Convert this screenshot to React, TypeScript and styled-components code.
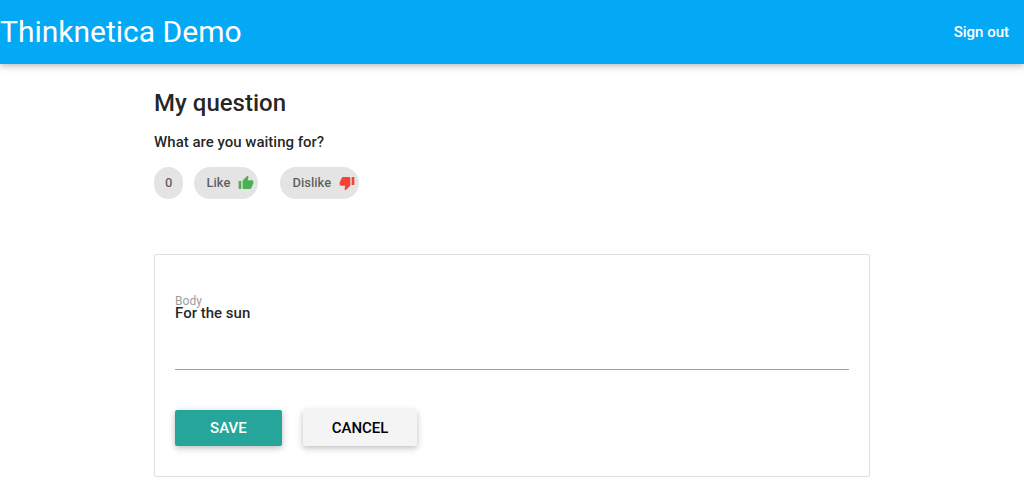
import React, { useState } from 'react';
import styled, { createGlobalStyle } from 'styled-components';
import { MdThumbUp, MdThumbDown } from 'react-icons/md';

const GlobalStyle = createGlobalStyle`
  *, *::before, *::after { box-sizing: border-box; }
  body {
    margin: 0;
    background: #fff;
    color: rgba(0, 0, 0, 0.87);
    font-family: Roboto, "Liberation Sans", sans-serif;
    font-size: 15px;
    font-weight: 500;
    line-height: 22px;
  }
  button, textarea { font: inherit; }
`;

const NavBar = styled.nav`
  display: flex;
  align-items: center;
  justify-content: space-between;
  height: 64px;
  background: #03a9f4;
  box-shadow: 0 2px 5px 0 rgba(0, 0, 0, 0.16), 0 2px 10px 0 rgba(0, 0, 0, 0.12);
`;

const Brand = styled.a`
  color: #fff;
  font-size: 30px;
  font-weight: 400;
  line-height: 64px;
  text-decoration: none;
`;

const NavLink = styled.a`
  padding: 0 15px;
  color: #fff;
  line-height: 64px;
  text-decoration: none;
`;

const Container = styled.main`
  width: calc(70% - 1px);
  margin: 0 auto;
`;

const Title = styled.h1`
  margin: 0;
  padding-top: 24px;
  font-size: 24px;
  font-weight: 500;
  line-height: 30px;
`;

const Text = styled.p`
  margin: 13px 0 14px;
`;

const Votes = styled.div`
  display: flex;
`;

const Chip = styled.button<{ $gap: number }>`
  display: inline-flex;
  align-items: center;
  height: 32px;
  margin: 0 ${({ $gap }) => $gap}px 0 0;
  padding: 0 4px 0 12px;
  border: 0;
  border-radius: 16px;
  background: #e4e4e4;
  color: rgba(0, 0, 0, 0.6);
  font-size: 13px;
  gap: 8px;
  cursor: pointer;
`;

const Score = styled(Chip).attrs({ as: 'span' })`
  padding: 0 11px;
  cursor: default;
`;

const Card = styled.form`
  margin-top: 55px;
  padding: 40px 20px 30px;
  border: 1px solid #e0e0e0;
  border-radius: 2px;
`;

const Label = styled.label`
  display: block;
  color: #9e9e9e;
  font-size: 12px;
  font-weight: 400;
  line-height: 12px;
`;

const Area = styled.textarea`
  display: block;
  width: 100%;
  height: 63px;
  padding: 0;
  border: 0;
  border-bottom: 1px solid #9e9e9e;
  outline: 0;
  background: transparent;
  color: inherit;
  line-height: 12px;
  resize: none;
`;

const Actions = styled.div`
  display: flex;
  gap: 21px;
  margin-top: 40px;
`;

const Button = styled.button<{ $primary?: boolean }>`
  height: 36px;
  padding: 0 ${({ $primary }) => ($primary ? 35 : 29)}px;
  border: 0;
  border-radius: 2px;
  background: ${({ $primary }) => ($primary ? '#26a69a' : '#f4f4f4')};
  color: ${({ $primary }) => ($primary ? '#fff' : '#000')};
  line-height: 36px;
  text-transform: uppercase;
  box-shadow: 0 2px 5px 0 rgba(0, 0, 0, 0.16), 0 2px 10px 0 rgba(0, 0, 0, 0.12);
  cursor: pointer;
`;

export default function App() {
  const [body, setBody] = useState('For the sun');
  return (
    <>
      <GlobalStyle />
      <NavBar>
        <Brand href="#">Thinknetica Demo</Brand>
        <NavLink href="#">Sign out</NavLink>
      </NavBar>
      <Container>
        <Title>My question</Title>
        <Text>What are you waiting for?</Text>
        <Votes>
          <Score $gap={11}>0</Score>
          <Chip type="button" $gap={22}>
            Like <MdThumbUp size={16} color="#4caf50" />
          </Chip>
          <Chip type="button" $gap={0}>
            Dislike <MdThumbDown size={16} color="#f44336" />
          </Chip>
        </Votes>
        <Card onSubmit={(e) => e.preventDefault()}>
          <Label htmlFor="body">Body</Label>
          <Area id="body" value={body} onChange={(e) => setBody(e.target.value)} />
          <Actions>
            <Button $primary type="submit">Save</Button>
            <Button type="button">Cancel</Button>
          </Actions>
        </Card>
      </Container>
    </>
  );
}
